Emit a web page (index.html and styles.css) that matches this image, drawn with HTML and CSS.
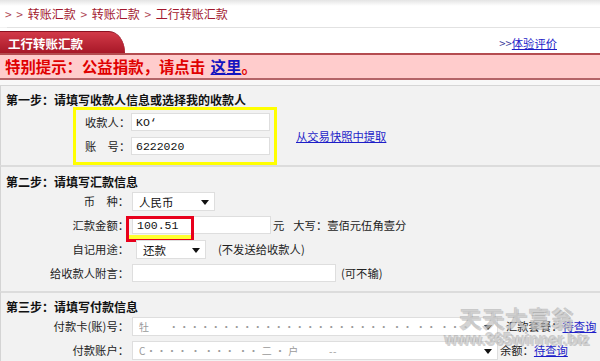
FILE: index.html
```html
<!DOCTYPE html>
<html lang="zh-CN">
<head>
<meta charset="utf-8"/>
<title>工行转账汇款</title>
<link rel="stylesheet" href="styles.css">
</head>
<body>
<div class="crumb"><span class="gt">&gt; &gt;</span> 转账汇款 <span class="gt">&gt;</span> 转账汇款 <span class="gt">&gt;</span> 工行转账汇款</div>
<div class="rule"></div>
<div class="tabbar">
  <div class="tab">工行转账汇款</div>
  <div class="rate"><span class="gt2">&gt;&gt;</span><a href="#">体验评价</a></div>
</div>
<div class="notice">特别提示：公益捐款，请点击 <a href="#">这里</a>。</div>
<div class="gap"></div>

<section class="step step1">
  <h3>第一步：请填写收款人信息或选择我的收款人</h3>
  <div class="step1-body">
    <div class="hl-yellow">
      <div class="prow"><label>收款人：</label><div class="inp w139">KO‘</div></div>
      <div class="prow"><label>账　号：</label><div class="inp w139">6222020<span class="mask"></span></div></div>
    </div>
    <a class="snap" href="#">从交易快照中提取</a>
  </div>
</section>

<section class="step step2">
  <h3>第二步：请填写汇款信息</h3>
  <div class="row"><label>币　种：</label><div class="sel w83">人民币</div></div>
  <div class="row">
    <label>汇款金额：</label><div class="inp w139 amt">100.51</div>
    <span class="yuan">元</span><span class="daxie">大写：壹佰元伍角壹分</span>
    <div class="hl-red"></div>
  </div>
  <div class="row"><label>自记用途：</label><div class="sel w70 use">还款</div><span class="note">(不发送给收款人)</span></div>
  <div class="row"><label>给收款人附言：</label><div class="inp w204"></div><span class="opt">(可不输)</span></div>
</section>

<section class="step step3">
  <h3>第三步：请填写付款信息</h3>
  <div class="row"><label>付款卡(账)号：</label><div class="sel w366 blur">牡 &nbsp; &nbsp; &nbsp; ·····················  ·· ·· ···</div><span class="extra">汇款套餐：<a href="#">待查询</a></span></div>
  <div class="row"><label>付款账户：</label><div class="sel w366 blur">C···· · ··· ·· 二 · 户 &nbsp; &nbsp; &nbsp; &nbsp; &nbsp; --</div><span class="extra bal">余额：<a href="#">待查询</a></span></div>
</section>

<div class="wm"><div class="wm1">天天大富翁</div><div class="wm2">www.365winner.biz</div></div>
</body>
</html>
```

FILE: styles.css
```css
body { margin: 0; font-family: "Noto Sans CJK SC", "Liberation Sans", sans-serif; font-size: 11.3px; color: #222; background: #f2f2f2; width: 600px; height: 361px; overflow: hidden; position: relative; }
a { color: #1d1dc8; }

.crumb { height: 27px; line-height: 28px; padding-left: 5px; color: #a2182e; background: linear-gradient(#e4e4e4 0, #ffffff 6px); font-size: 12px; word-spacing: 2px; }
.crumb .gt { color: #b04a58; }
.rule { height: 1px; margin-left: 7px; background: #e2e2e2; }

.tabbar { height: 25px; display: flex; justify-content: space-between; align-items: flex-end; background: #fff; }
.tab {
  width: 125px;
  height: 22px;
  line-height: 23px;
  padding-left: 8px;
  box-sizing: border-box;
  color: #fff;
  font-weight: bold;
  font-size: 12.5px;
  background: linear-gradient(#d23a48, #a81828);
  border-top: 1px solid #8c1020;
  border-radius: 0 16px 0 0 / 0 22px 0 0;
}
.rate { align-self: center; margin-right: 43px; margin-top: 4px; }
.rate .gt2 { color: #3a3a9a; }

.notice {
  height: 23px;
  line-height: 23px;
  padding-left: 5px;
  background: #ffcccc;
  border-top: 2px solid #b44c50;
  border-bottom: 2px solid #b46468;
  color: #e00000;
  font-size: 15.4px;
  font-weight: bold;
}
.notice a { margin-left: 2px; color: #1414c0; }
.gap { height: 5px; background: #f8f8f8; border-bottom: 1px solid #d6d6d6; }

.step { border-left: 1px solid #d4d4d4; }
.step h3 { margin: 0; padding: 7px 0 0 5px; line-height: 14px; font-size: 12px; font-weight: bold; color: #111; }
.step2, .step3 { border-top: 2px solid #dcdcdc; }
.step2 h3 { padding-top: 8px; }
.step2 { padding-bottom: 6px; }

.step1-body { display: flex; align-items: center; }
.hl-yellow { margin-left: 72px; width: 204px; height: 58px; box-sizing: border-box; border: 3px solid #ffff00; padding: 3px 0 0 9px; display: flex; flex-direction: column; gap: 6px; }
.prow { display: flex; align-items: center; height: 18px; }
.prow label { width: 46px; }
.snap { margin-left: 19px; }

.inp, .sel { height: 18px; line-height: 18px; box-sizing: border-box; background: #fff; border: 1px solid #dedede; padding-left: 4px; font-family: "Liberation Mono", "Noto Sans CJK SC", monospace; font-size: 11.5px; color: #111; }
.mask { display: inline-block; width: 60px; }
.sel { position: relative; height: 19px; font-family: "Noto Sans CJK SC", sans-serif; padding-left: 6px; }
.sel::after { content: ""; position: absolute; right: 5px; top: 7px; border-left: 4px solid transparent; border-right: 4px solid transparent; border-top: 5px solid #111; }
.w83 { width: 83px; }
.w70 { width: 70px; }
.w139 { width: 139px; }
.w204 { width: 204px; }
.w366 { width: 366px; }

.row { display: flex; align-items: center; height: 24px; position: relative; }
.row label { width: 128px; text-align: right; margin-right: 3px; }
.amt { padding-left: 4px; }
.yuan { margin-left: 2px; }
.daxie { margin-left: 9px; }
.use { margin-left: 4px; }
.note { margin-left: 12px; }
.opt { margin-left: 5px; }
.blur { color: #9a9a9a; font-size: 10px; letter-spacing: 0.5px; }
.extra { margin-left: 8px; }
.extra.bal { margin-left: 2px; }

.hl-red { position: absolute; left: 125px; top: 3px; width: 68px; height: 26px; box-sizing: border-box; border: 3px solid #e8001c; }
.hl-red::after { content: ""; position: absolute; left: 0; right: 0; bottom: 0; height: 4px; background: #ffff30; }

.wm { position: absolute; left: 442px; top: 304px; width: 150px; text-align: center; color: rgba(215, 215, 215, 0.6); font-weight: bold; font-family: "Liberation Sans", "Noto Sans CJK SC", sans-serif; text-shadow: 1px 1px 0 rgba(150, 150, 150, 0.45), -1px -1px 0 rgba(150, 150, 150, 0.45); pointer-events: none; }
.wm1 { font-size: 22px; line-height: 26px; font-family: "Noto Sans CJK SC", sans-serif; letter-spacing: 1px; }
.wm2 { font-size: 16px; line-height: 20px; }
```
